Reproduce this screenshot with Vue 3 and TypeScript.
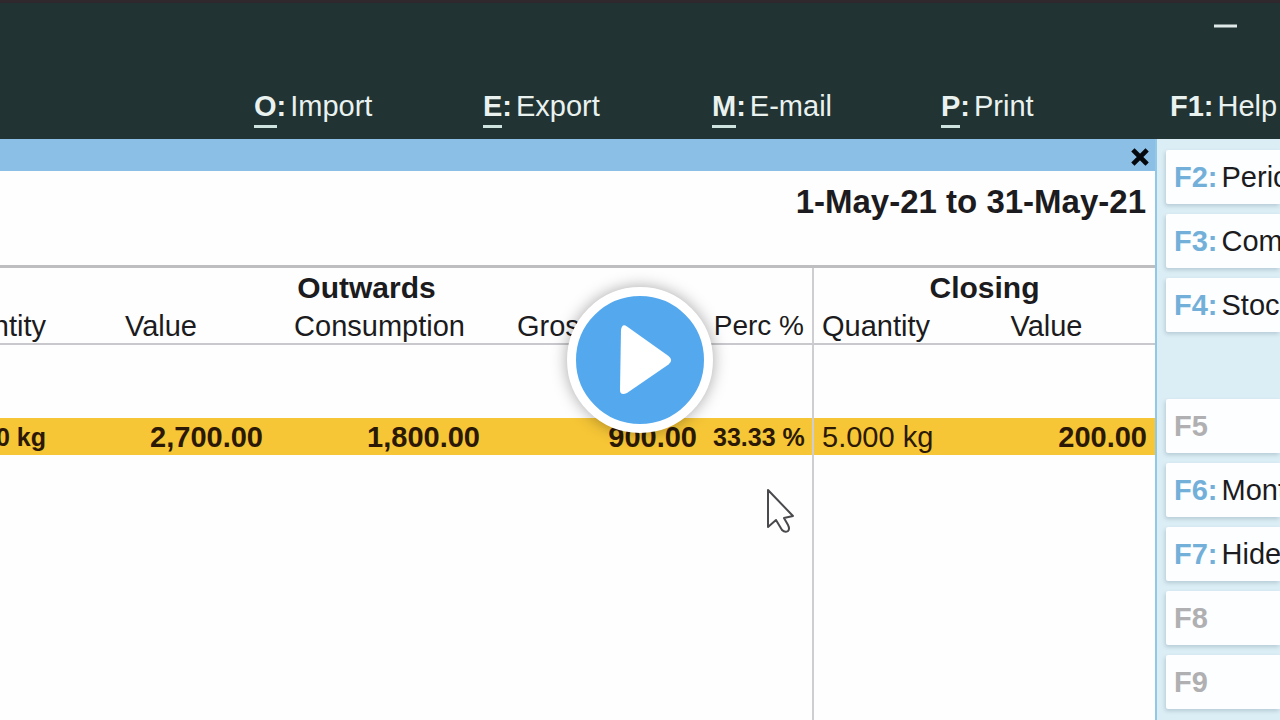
<script setup lang="ts">
interface MenuItem { key: string; label: string; underline: boolean }
interface SideItem { key: string; label?: string; spaced?: boolean }

const menu: MenuItem[] = [
  { key: 'O', label: 'Import', underline: true },
  { key: 'E', label: 'Export', underline: true },
  { key: 'M', label: 'E-mail', underline: true },
  { key: 'P', label: 'Print', underline: true },
  { key: 'F1', label: 'Help', underline: false },
]

const side: SideItem[] = [
  { key: 'F2', label: 'Period' },
  { key: 'F3', label: 'Company' },
  { key: 'F4', label: 'Stock Item' },
  { key: 'F5', spaced: true },
  { key: 'F6', label: 'Monthly' },
  { key: 'F7', label: 'Hide' },
  { key: 'F8' },
  { key: 'F9' },
]
</script>

<template>
  <div class="page">
    <header class="top">
      <div class="window-bar">
        <button class="plain" type="button" aria-label="Minimize">
          <svg width="24" height="4" viewBox="0 0 24 4"><rect y="0.500" width="23" height="3" fill="#dfe9e7" /></svg>
        </button>
      </div>
      <nav class="menu">
        <button v-for="m in menu" :key="m.key" class="plain menu-item" type="button">
          <b><span :class="{ underlined: m.underline }">{{ m.key }}</span>:</b><span class="menu-label">{{ m.label }}</span>
        </button>
      </nav>
    </header>

    <div class="body">
      <main class="report">
        <div class="title-bar">
          <button class="plain" type="button" aria-label="Close">
            <svg width="18" height="18" viewBox="0 0 18 18"><path d="M3.500 3.500L14.500 14.500M14.500 3.500L3.500 14.500" stroke="#05080c" stroke-width="4.600" stroke-linecap="square" /></svg>
          </button>
        </div>
        <div class="period">1-May-21 to 31-May-21</div>
        <table class="grid">
          <colgroup>
            <col class="c-first" /><col class="c-value" /><col class="c-cons" /><col class="c-cons" />
            <col class="c-perc" /><col class="c-qty" /><col class="c-cons" />
          </colgroup>
          <thead>
            <tr class="groups">
              <th colspan="5">Outwards</th>
              <th colspan="2" class="split">Closing</th>
            </tr>
            <tr class="names">
              <th class="end tight">Quantity</th>
              <th>Value</th>
              <th>Consumption</th>
              <th class="gross">Gross Profit</th>
              <th class="end perc">Perc %</th>
              <th class="end split">Quantity</th>
              <th>Value</th>
            </tr>
          </thead>
          <tbody>
            <tr class="spacer"><td colspan="5"></td><td colspan="2" class="split"></td></tr>
            <tr class="current">
              <td class="narrow tight">45.000 kg</td>
              <td>2,700.00</td>
              <td>1,800.00</td>
              <td>900.00</td>
              <td class="narrow">33.33 %</td>
              <td class="split regular">5.000 kg</td>
              <td>200.00</td>
            </tr>
            <tr><td colspan="5"></td><td colspan="2" class="split"></td></tr>
          </tbody>
        </table>
      </main>

      <aside class="side">
        <button
          v-for="s in side"
          :key="s.key"
          type="button"
          class="side-item"
          :class="{ spaced: s.spaced, off: !s.label }"
          :disabled="!s.label"
        ><b>{{ s.key }}<template v-if="s.label">:</template></b><span v-if="s.label" class="side-label">{{ s.label }}</span></button>
      </aside>
    </div>

    <button class="plain play" type="button" aria-label="Play video">
      <svg width="128" height="128" viewBox="0 0 128 128">
        <path d="M51 30.500L92.500 60Q98 64.500 92.500 68.500L51 97Q44 100 44 94L45 34Q46 27 51 30.500Z" fill="#fff" />
      </svg>
    </button>
    <svg class="pointer" width="30" height="46" viewBox="0 0 30 46">
      <path d="M2 2V39L10 32L16 42Q19 45 22 43Q24 41 22 37L18 30L27 28Z" fill="#fff" stroke="#4a4a4e" stroke-width="2" stroke-linejoin="round" />
    </svg>
  </div>
</template>

<style>
body {
  margin: 0;
  overflow: hidden;
}
</style>

<style scoped>
.page {
  position: relative;
  display: flex;
  flex-direction: column;
  height: 100vh;
  overflow: hidden;
  font-family: "Liberation Sans", Arial, sans-serif;
  font-size: 29px;
  line-height: 34px;
  color: #1b1b20;
  background: #fefefe;
}
.plain {
  display: block;
  padding: 0;
  border: 0;
  background: none;
  font: inherit;
  color: inherit;
  white-space: nowrap;
  text-align: left;
}
svg {
  display: block;
  fill: none;
}
.top {
  box-sizing: border-box;
  flex: none;
  height: 139px;
  border-top: 3px solid #2f282c;
  background: #213433;
  color: #eaf2f0;
}
.window-bar {
  display: flex;
  justify-content: flex-end;
  padding: 21px 42px 0 0;
}
.menu {
  display: grid;
  grid-template-columns: repeat(5, 229px);
  padding: 61px 0 0 254px;
}
.underlined {
  padding-bottom: 3px;
  border-bottom: 3px solid #cfe3de;
}
.menu-label,
.side-label {
  margin-left: 4px;
}
.body {
  display: grid;
  grid-template-columns: minmax(0, 1fr) 123px;
  flex: 1;
  min-height: 0;
}
.report {
  display: flex;
  flex-direction: column;
  overflow: hidden;
  border-right: 2px solid #91c8e6;
}
.title-bar {
  display: flex;
  flex: none;
  align-items: center;
  justify-content: flex-end;
  box-sizing: border-box;
  height: 32px;
  padding: 4px 8px 0 0;
  margin-right: -2px;
  background: #8bbfe5;
}
.period {
  flex: none;
  box-sizing: border-box;
  height: 97px;
  padding: 14px 9px 0 0;
  border-bottom: 3px solid #bebdc0;
  font-size: 33px;
  font-weight: bold;
  text-align: right;
}
.grid {
  flex: 1;
  width: calc(100% + 79px);
  margin-left: -79px;
  border-spacing: 0;
  table-layout: fixed;
}
.c-value { width: 220px; }
.c-cons { width: 217px; }
.c-perc { width: 107px; }
.c-qty { width: 126px; }
.grid th,
.grid td {
  padding: 0 8px;
  text-align: right;
  white-space: nowrap;
}
.grid th {
  padding: 0;
  text-align: center;
}
.grid .split {
  border-left: 2px solid #cecdd2;
}
.groups {
  height: 40px;
}
.groups th {
  font-size: 30px;
}
.names {
  height: 37px;
}
.names th {
  font-weight: normal;
  border-bottom: 2px solid #c9c8cc;
}
.names .gross {
  padding-right: 6px;
}
.names .end {
  padding-right: 8px;
  text-align: right;
}
.names .perc {
  font-size: 28px;
}
.grid .tight {
  padding-right: 5px;
}
.spacer {
  height: 73px;
}
.current {
  height: 37px;
}
.current td {
  background: #f6c636;
  color: #2b1905;
  font-weight: bold;
}
.current .narrow {
  font-size: 25px;
}
.current .regular {
  font-weight: normal;
}
.side {
  display: flex;
  flex-direction: column;
  gap: 10px;
  overflow: hidden;
  padding: 11px 0 0 9px;
  background: #dceef5;
}
.side-item {
  flex: none;
  height: 54px;
  padding: 0 0 0 8px;
  border: 0;
  border-radius: 2px 0 0 2px;
  background: #fdfeff;
  box-shadow: -1px 2px 4px #b4cad6;
  overflow: hidden;
  font: inherit;
  text-align: left;
  white-space: nowrap;
  color: #1b1b20;
}
.side-item b {
  color: #73b0d9;
}
.side-item.off b {
  color: #b0b0b2;
}
.side-item.spaced {
  margin-top: 57px;
}
.play {
  position: absolute;
  top: 50%;
  left: 50%;
  transform: translate(-50%, -50%);
  border: 9px solid #fff;
  border-radius: 50%;
  background: #54a9ee;
  box-shadow: 0 0 16px rgba(0, 0, 0, 0.35);
}
.pointer {
  position: absolute;
  top: 488px;
  left: 766px;
}
</style>
